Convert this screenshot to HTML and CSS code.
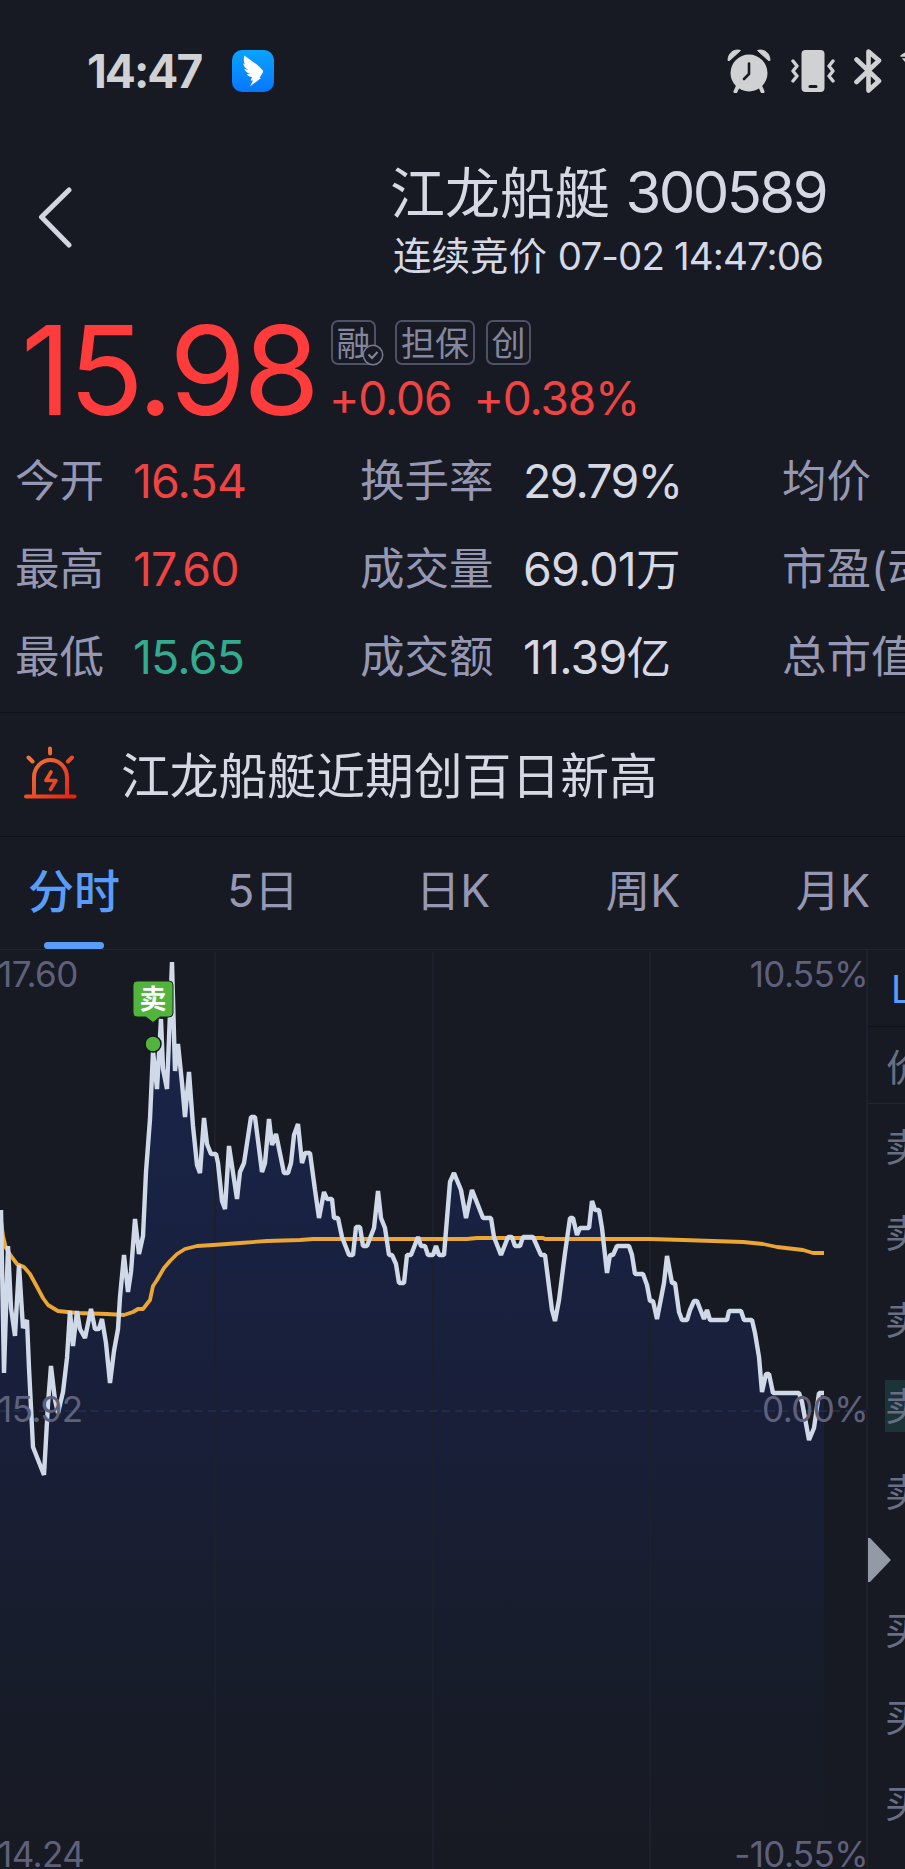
FILE: index.html
```
<!DOCTYPE html>
<html lang="zh-CN">
<head>
    <meta charset="UTF-8">
    <meta name="viewport" content="width=device-width, initial-scale=1.0">
    <title>江龙船艇 300589</title>
    <link rel="stylesheet" href="styles.css">
</head>

<body>

<div class="status-bar">
    <span class="clock">14:47</span>
    <svg class="app-icon" width="42" height="42" viewBox="0 0 42 42">
        <defs>
            <linearGradient id="appBlue" x1="0" y1="0" x2="0" y2="1">
                <stop offset="0" stop-color="#08a4ff"/>
                <stop offset="1" stop-color="#0876ff"/>
            </linearGradient>
        </defs>
        <rect width="42" height="42" rx="10" fill="url(#appBlue)"/>
        <path d="M12.5 5.5C16 9 25 13.500 30 19.500C31.500 21 31.300 22 30.500 23L27.500 28H29L18 36.500L21 30.500H18.500L20 27C17.500 27 16 26 14.800 24.300L18 24C15 23 13 21 12.200 18.800L16.500 20C13 18 11.500 16 11.200 13.500L13 14.500C11.500 12 11.500 8 12.500 5.500Z" fill="#fff"/>
    </svg>
    <div class="status-icons">
        <svg width="44" height="44" viewBox="0 0 44 44">
            <circle cx="22" cy="24" r="18.500" fill="#d0d1d3"/>
            <path d="M11 37L8.500 42.500M33 37L35.500 42.500" stroke="#d0d1d3" stroke-width="4" stroke-linecap="round"/>
            <path d="M1 11.500C1 4 7 -0.500 13.500 1.500L2.500 11.500ZM43 11.500C43 4 37 -0.500 30.500 1.500L41.500 11.500Z" fill="#d0d1d3" stroke="#d0d1d3" stroke-linejoin="round"/>
            <path d="M22 14.500V25L17 30" stroke="#171a22" stroke-width="2.600" fill="none" stroke-linecap="round"/>
        </svg>
        <svg width="44" height="44" viewBox="0 0 44 44">
            <rect x="10.500" y="1" width="23" height="42" rx="4" fill="#d0d1d3"/>
            <rect x="17.500" y="36" width="9" height="3" rx="1.500" fill="#171a22"/>
            <path d="M2 12L6 17L2 22L6 27L2 32M42 12L38 17L42 22L38 27L42 32" stroke="#d0d1d3" stroke-width="3.400" fill="none" stroke-linecap="round" stroke-linejoin="round"/>
        </svg>
        <svg width="28" height="44" viewBox="0 0 28 44">
            <path d="M2.500 10.500L25 32L14.500 41.500V2.500L25 11.500L2.500 33" stroke="#d0d1d3" stroke-width="4.600" fill="none" stroke-linecap="round" stroke-linejoin="round"/>
        </svg>
        <svg class="wifi" width="30" height="44" viewBox="0 0 30 44">
            <path d="M0 7Q5 2 14 1V17Q8 16 5 13Z" fill="#d0d1d3"/>
            <path d="M0 8.500H6" stroke="#171a22" stroke-width="1.500"/>
        </svg>
    </div>
</div>

<div class="nav">
    <svg class="back" width="36" height="62" viewBox="0 0 36 62">
        <path d="M31 3L3.500 30L31 58" stroke="#d3d6e1" stroke-width="5" fill="none" stroke-linecap="round" stroke-linejoin="round"/>
    </svg>
    <div class="nav-title">
        <h1>江龙船艇 <span class="code">300589</span></h1>
        <p>连续竞价 <span class="time">07-02 14:47:06</span></p>
    </div>
</div>

<div class="quote">
    <div class="price">15.98</div>
    <div class="quote-side">
        <div class="tags">
            <span class="tag tag-margin">融
                <svg class="tag-check" width="22" height="22" viewBox="0 0 22 22">
                    <circle cx="11" cy="11" r="9.700" fill="#171a22" stroke="#777990" stroke-width="1.500"/>
                    <path d="M6.500 10.500L10 14L15.500 8" stroke="#85879f" stroke-width="2" fill="none"/>
                </svg>
            </span>
            <span class="tag tag-wide">担保</span>
            <span class="tag">创</span>
        </div>
        <div class="change"><span>+0.06</span><span>+0.38%</span></div>
    </div>
</div>

<div class="stats">
    <span class="label">今开</span><span class="value up">16.54</span>
    <span class="label">换手率</span><span class="value rate">29.79%</span>
    <span class="label">均价</span>
    <span class="label">最高</span><span class="value up">17.60</span>
    <span class="label">成交量</span><span class="value">69.01<i>万</i></span>
    <span class="label">市盈(动)</span>
    <span class="label">最低</span><span class="value down">15.65</span>
    <span class="label">成交额</span><span class="value">11.39<i>亿</i></span>
    <span class="label">总市值</span>
</div>

<div class="notice">
    <svg width="54" height="54" viewBox="0 0 54 54">
        <defs>
            <linearGradient id="alarm" x1="0" y1="0" x2="54" y2="54" gradientUnits="userSpaceOnUse">
                <stop offset="0.200" stop-color="#f0743a"/>
                <stop offset="0.900" stop-color="#e62413"/>
            </linearGradient>
        </defs>
        <g stroke="url(#alarm)" stroke-width="4" fill="none" stroke-linecap="round" stroke-linejoin="round">
            <path d="M2 50.500H50.500"/>
            <path d="M10 50V31.500A16.500 17.500 0 0 1 43 31.500V50"/>
            <path d="M26 2.500L26.100 7.500M4.500 11.500L8.500 15.500M48 11.500L44 15.500"/>
            <path d="M27 26L22 34.500H32L26.500 43.500" stroke-width="3.600"/>
        </g>
    </svg>
    <span>江龙船艇近期创百日新高</span>
</div>

<div class="tabs">
    <span class="tab active">分时</span>
    <span class="tab">5日</span>
    <span class="tab">日K</span>
    <span class="tab">周K</span>
    <span class="tab">月K</span>
</div>

<div class="main">
    <div class="chart">
        <svg width="868" height="919" viewBox="0 950 868 919">
            <defs>
                <linearGradient id="area" x1="0" y1="960" x2="0" y2="1869" gradientUnits="userSpaceOnUse">
                    <stop offset="0" stop-color="#18254c"/>
                    <stop offset="0.500" stop-color="#191f39"/>
                    <stop offset="0.900" stop-color="#171b25"/>
                    <stop offset="1" stop-color="#171a22"/>
                </linearGradient>
            </defs>
            <polygon id="fill" fill="url(#area)"/>
            <path d="M215 952V1869M433 952V1869M650 952V1869M867 950V1869" stroke="#1c202c" stroke-width="2"/>
            <path d="M0 1411H868" stroke="#202b49" stroke-width="2" stroke-dasharray="8 5"/>
            <polyline id="average" fill="none" stroke="#eca634" stroke-width="3.800" stroke-linejoin="round"/>
            <polyline id="price" fill="none" stroke="#d0d9e8" stroke-width="4.400" stroke-linejoin="bevel"/>
            <path d="M137 981H169Q173 981 173 985V1013Q173 1017 169 1017H160L153 1022.500L146 1017H137Q133 1017 133 1013V985Q133 981 137 981Z" fill="#52b33d" stroke="#14271a" stroke-width="1"/>
            <circle cx="153" cy="1044" r="8" fill="#52b33d" stroke="#10151c" stroke-width="1.500"/>
            <text class="sell-text" x="153" y="1009" text-anchor="middle">卖</text>
        </svg>
        <span class="axis top left">17.60</span>
        <span class="axis top right">10.55%</span>
        <span class="axis middle left">15.92</span>
        <span class="axis middle right">0.00%</span>
        <span class="axis bottom left">14.24</span>
        <span class="axis bottom right">-10.55%</span>
    </div>

    <div class="orders">
        <div class="orders-tab">L2</div>
        <div class="orders-head">价</div>
        <div class="asks">
            <div class="row">卖5</div>
            <div class="row">卖4</div>
            <div class="row">卖3</div>
            <div class="row"><span class="hit">卖2</span></div>
            <div class="row">卖1</div>
        </div>
        <svg class="expand" width="24" height="46" viewBox="0 0 24 46">
            <path d="M0 1L2 1L23 23L2 45H0Z" fill="#9499a8"/>
        </svg>
        <div class="bids">
            <div class="row">买1</div>
            <div class="row">买2</div>
            <div class="row">买3</div>
        </div>
    </div>
</div>

<script>
    const price = "1,1210 4,1373 8,1246 11,1308 15,1336 19,1265 23,1328 27,1320 29,1368 33,1447 44,1475 48,1404 51,1366 55,1400 58,1413 63,1392 67,1358 70,1311 73,1346 77,1311 80,1329 85,1338 91,1309 95,1329 99,1329 102,1319 106,1343 110,1383 114,1351 118,1329 120,1297 124,1255 128,1292 131,1272 135,1219 139,1254 143,1236 146,1172 150,1119 153,1051 157,1089 161,1019 163,1069 167,1089 172,962 175,1071 178,1044 182,1083 185,1117 189,1072 193,1126 197,1165 200,1173 204,1118 207,1144 211,1154 216,1154 218,1163 222,1201 225,1209 229,1146 237,1199 240,1172 244,1163 251,1117 255,1117 262,1172 265,1163 269,1119 272,1145 276,1134 284,1173 288,1173 291,1163 294,1135 298,1124 302,1163 305,1153 310,1153 315,1190 319,1218 324,1192 327,1199 332,1199 334,1218 338,1218 342,1237 349,1255 353,1255 356,1227 360,1227 363,1246 367,1246 374,1228 378,1191 381,1218 385,1228 389,1255 392,1255 396,1264 399,1283 404,1283 407,1255 411,1255 418,1237 421,1246 425,1246 428,1255 433,1255 436,1246 439,1255 444,1255 450,1182 454,1173 461,1190 466,1218 472,1190 483,1218 491,1218 494,1237 501,1255 508,1237 512,1237 515,1246 520,1246 523,1237 533,1237 541,1255 545,1255 552,1310 555,1321 559,1300 565,1253 570,1218 573,1218 577,1235 580,1228 589,1228 592,1201 595,1210 599,1210 602,1228 607,1273 610,1255 613,1255 617,1246 629,1246 632,1255 635,1274 643,1274 647,1285 650,1301 653,1301 657,1319 664,1283 667,1256 672,1283 675,1283 679,1312 682,1320 687,1320 690,1310 694,1301 697,1301 704,1319 707,1310 710,1320 727,1320 729,1311 741,1311 744,1320 752,1320 755,1333 759,1357 762,1392 766,1374 769,1374 773,1393 799,1393 802,1402 809,1440 814,1428 819,1393 824,1393";
    const average = "0,1212 3,1236 6,1248 11,1256 17,1264 24,1267 30,1274 36,1285 43,1298 48,1305 58,1311 77,1313 107,1314 124,1315 133,1312 138,1309 143,1309 150,1300 153,1286 157,1280 164,1268 170,1261 177,1254 185,1249 197,1246 213,1245 240,1243 267,1241 300,1240 313,1239 467,1239 477,1238 543,1238 545,1239 650,1239 683,1240 713,1241 743,1242 763,1244 777,1247 803,1250 813,1253 824,1253";

    document.getElementById("price").setAttribute("points", price);
    document.getElementById("average").setAttribute("points", average);
    document.getElementById("fill").setAttribute("points", "0,1869 0,1210 " + price + " 824,1869");
</script>

</body>
</html>
```
FILE: styles.css
```
* {
    box-sizing: border-box;
    margin: 0;
    padding: 0;
}

body {
    width: 905px;
    height: 1869px;
    overflow: hidden;
    background: #171a22;
    color: #d6d9e4;
    font-family: Inter, "Noto Sans CJK SC", sans-serif;
    white-space: nowrap;
}

svg {
    display: block;
    flex-shrink: 0;
}

/* Status bar */
.status-bar {
    display: flex;
    align-items: center;
    height: 142px;
    padding-left: 87px;
    overflow: hidden;
}

.clock {
    flex: 0 0 145px;
    font-size: 46px;
    font-weight: 700;
    letter-spacing: -2px;
    color: #d0d1d3;
}

.status-icons {
    display: flex;
    gap: 19.5px;
    margin-left: 453px;
}

.wifi {
    margin-left: -2px;
}

/* Title */
.nav {
    display: flex;
    height: 162px;
}

.back {
    margin: 45px 0 0 38px;
}

.nav-title {
    width: 470px;
    margin-left: 299px;
    text-align: center;
}

h1 {
    margin-top: 17px;
    font-size: 55px;
    font-weight: 400;
    line-height: 66px;
}

.code {
    font-size: 58px;
    letter-spacing: -2.6px;
}

.nav-title p {
    font-size: 38.5px;
    line-height: 61px;
}

.time {
    letter-spacing: -0.9px;
}

/* Price */
.quote {
    display: flex;
    height: 132px;
}

.price {
    width: 310px;
    padding-left: 21px;
    font-size: 124px;
    line-height: 132px;
    letter-spacing: -3px;
    color: #ff3b3b;
}

.quote-side {
    padding: 16px 0 0 21px;
}

.tags {
    display: flex;
    gap: 11px;
}

.tag {
    position: relative;
    width: 45px;
    height: 45px;
    border: 2px solid #4f5166;
    border-radius: 7px;
    font-size: 34px;
    line-height: 43px;
    text-align: center;
    color: #85879f;
}

.tag-margin {
    margin-right: 8px;
}

.tag-wide {
    width: 80px;
}

.tag-check {
    position: absolute;
    right: -10px;
    bottom: -3px;
}

.change {
    display: flex;
    gap: 22px;
    margin: 9px 0 0 -2px;
    font-size: 46px;
    line-height: 48px;
    letter-spacing: -1.1px;
    color: #f04343;
}

/* Stats grid */
.stats {
    display: grid;
    grid-template-columns: 118px 227px 163px 259px 123px;
    grid-auto-rows: 88px;
    height: 276px;
    padding: 1px 0 0 15px;
    line-height: 88px;
    font-size: 44.5px;
}

.label {
    color: #9698b3;
}

.value {
    font-size: 46.5px;
    letter-spacing: -0.8px;
}

.value.rate {
    letter-spacing: -1.8px;
}

.value i {
    font-style: normal;
    font-size: 44.5px;
}

.up {
    color: #f04343;
}

.down {
    color: #33ab8e;
}

/* Notice */
.notice {
    display: flex;
    align-items: center;
    gap: 43px;
    height: 125px;
    padding: 0 0 4px 24px;
    border-top: 1px solid #101219;
    border-bottom: 1px solid #101219;
    font-size: 48.8px;
}

/* Tabs */
.tabs {
    display: flex;
    height: 113px;
    border-bottom: 1px solid #22242f;
    font-size: 44.5px;
    line-height: 109px;
    color: #9698b3;
}

.tab {
    position: relative;
    width: 190px;
    text-align: center;
    flex-shrink: 0;
}

.tab.active {
    width: 148px;
    margin-right: 20px;
    font-size: 46px;
    font-weight: 500;
    color: #5a9df8;
}

.tab.active::after {
    content: "";
    position: absolute;
    left: 44px;
    bottom: 0;
    width: 60px;
    height: 7px;
    border-radius: 4px;
    background: #5a9df8;
}

/* Chart and order book */
.main {
    display: flex;
    height: 919px;
}

.chart {
    position: relative;
    width: 868px;
    flex-shrink: 0;
}

.axis {
    position: absolute;
    font-size: 35px;
    line-height: 40px;
    letter-spacing: -0.6px;
    color: #5f617c;
}

.left {
    left: -2px;
}

.right {
    right: 0;
}

.top {
    top: 4px;
}

.middle {
    top: 439px;
}

.bottom {
    bottom: -5px;
}

.sell-text {
    font-size: 27px;
    font-weight: 700;
    fill: #fff;
}

.orders {
    width: 37px;
    overflow: hidden;
    font-size: 38px;
    color: #686f84;
}

.orders-tab {
    height: 77px;
    padding-left: 23px;
    border-bottom: 1px solid #101219;
    line-height: 79px;
    color: #5a9df8;
}

.orders-head {
    height: 77px;
    padding-left: 18px;
    border-bottom: 1px solid #22242f;
    line-height: 80px;
}

.row {
    height: 86.3px;
    padding-left: 17px;
    line-height: 87px;
}

.hit {
    display: inline-block;
    background: #1c3438;
    line-height: 52px;
}

.expand {
    margin: 2px 0 4px;
}
```
